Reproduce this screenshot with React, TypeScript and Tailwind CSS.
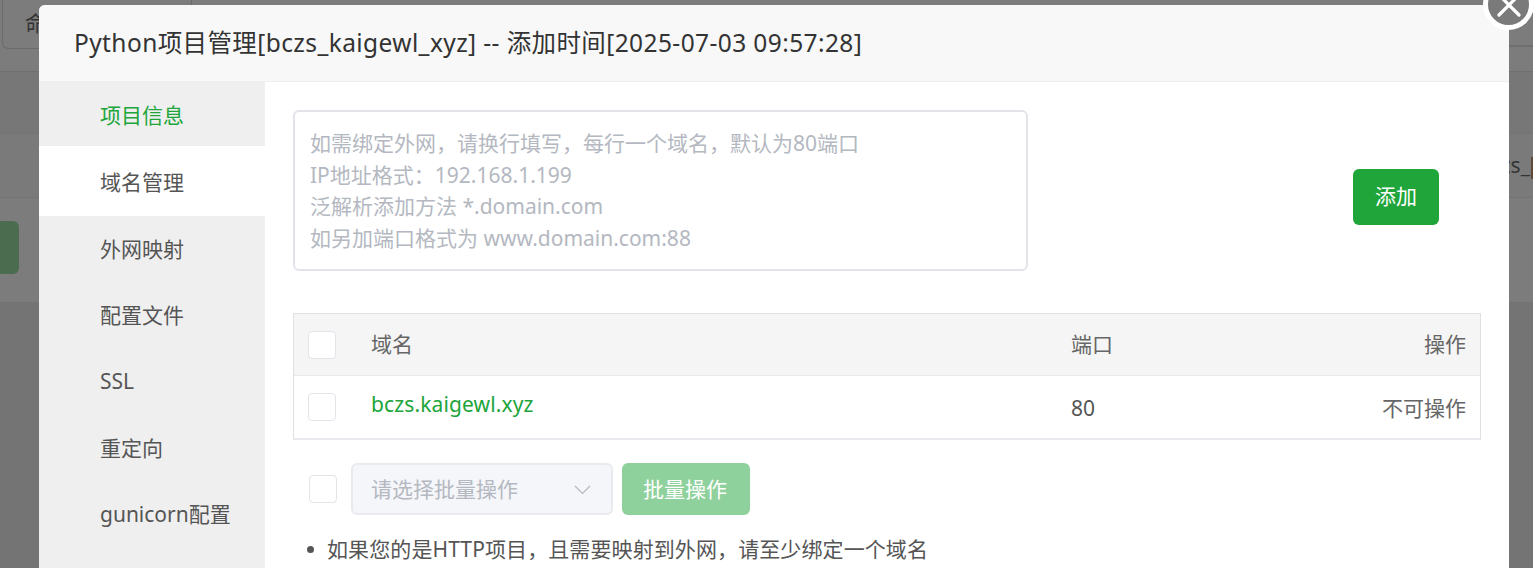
const font = { fontFamily: '"Noto Sans", "Noto Sans CJK SC", sans-serif' };

function Check() {
  return <span className="block w-[28px] h-[28px] bg-white border border-[#e2e4ea] rounded-[4px]" />;
}

function Background() {
  return (
    <div className="absolute inset-0 bg-[#7f7f7f] overflow-hidden">
      <div className="flex flex-col h-full">
        <div className="h-[72px] border-b border-[#6f6f6f] bg-[#7c7c7c] flex pl-[2px] relative">
          <div className="w-[190px] h-[49px] border border-[#6b6b6b] rounded-b-[6px] border-t-0 flex items-center pl-[22px] text-[21px] text-[#333]">命令</div>
          <div className="absolute right-0 top-[45px] w-[60px] h-[2px] bg-[#6f6f6f]" />
        </div>
        <div className="h-[61px] bg-[#777777]" />
        <div className="h-[64px] bg-[#7a7a7a] border-t border-[#747474] relative">
          <div className="absolute right-[3px] top-[16px] text-[21px] text-[#333]">zs_</div>
          <div className="absolute right-0 top-[23px] w-[2px] h-[22px] bg-[#5f4a3a]" />
        </div>
        <div className="h-[106px] bg-[#7c7c7c] border-t border-b border-[#737373]">
          <div className="w-[19px] h-[53px] bg-[#4c6c4f] rounded-r-[6px] mt-[23px]" />
        </div>
        <div className="flex-1 bg-[#747474]" />
      </div>
    </div>
  );
}

const items = [
  ["项目信息", "h-[64px] pt-[4px]", "text-[#20a53a] bg-[#efefef]"],
  ["域名管理", "h-[70px] pt-[3px]", "text-[#555] bg-white"],
  ["外网映射", "h-[66px] pt-[1px]", "text-[#555]"],
  ["配置文件", "h-[66px] pt-[1px]", "text-[#555]"],
  ["SSL", "h-[67px]", "text-[#555]"],
  ["重定向", "h-[67px]", "text-[#555]"],
  ["gunicorn配置", "h-[66px]", "text-[#555]"],
];

export default function App() {
  return (
    <div className="relative w-[1533px] h-[568px] overflow-hidden" style={font}>
      <Background />
      <div className="absolute left-[39px] top-[5px] w-[1470px] h-[600px] bg-white rounded-t-[6px] flex flex-col">
        <div className="h-[77px] shrink-0 bg-[#f8f8f8] border-b border-[#eeeeee] rounded-t-[6px] flex items-center pl-[35px] text-[24.5px] tracking-[0.4px] text-[#333] whitespace-nowrap">
          Python项目管理[bczs_kaigewl_xyz] -- 添加时间[2025-07-03 09:57:28]
        </div>
        <div className="flex flex-1">
          <div className="w-[226px] shrink-0 bg-[#efefef] flex flex-col">
            {items.map(([t, h, c]) => (
              <div key={t} className={`${h} ${c} flex items-center pl-[61px] text-[21px] whitespace-nowrap`}>{t}</div>
            ))}
          </div>
          <div className="flex-1 pl-[28px] pr-[28px] pt-[28px] text-[21px] text-[#555]">
            <div className="flex items-center">
              <div className="w-[735px] h-[161px] border-2 border-[#e2e4ea] rounded-[6px] pl-[15px] pt-[16px] text-[#b4b8c1] text-[21px] leading-[31.5px] whitespace-nowrap">
                <div>如需绑定外网，请换行填写，每行一个域名，默认为80端口</div>
                <div>IP地址格式：192.168.1.199</div>
                <div>泛解析添加方法 *.domain.com</div>
                <div>如另加端口格式为 www.domain.com:88</div>
              </div>
              <button className="ml-[325px] mt-[12px] w-[86px] h-[56px] bg-[#20a53a] rounded-[6px] text-white text-[21px]">添加</button>
            </div>
            <div className="mt-[42px] w-[1188px] border border-[#e0e0e0] border-b-2 border-b-[#e8eaf0]">
              <div className="h-[62px] bg-[#f5f5f5] border-b border-[#e8eaf0] flex items-center pl-[14px] pr-[14px] text-[#666]">
                <Check />
                <span className="ml-[35px] w-[700px]">域名</span>
                <span className="w-[100px]">端口</span>
                <span className="flex-1 text-right">操作</span>
              </div>
              <div className="h-[62px] flex items-center pl-[14px] pr-[14px]">
                <Check />
                <span className="ml-[35px] w-[700px] text-[#20a53a] mt-[-4px] tracking-[0.12px]">bczs.kaigewl.xyz</span>
                <span className="w-[100px] mt-[4px]">80</span>
                <span className="flex-1 text-right text-[#666] mt-[4px]">不可操作</span>
              </div>
            </div>
            <div className="mt-[23px] flex items-center pl-[16px]">
              <Check />
              <div className="ml-[14px] w-[262px] h-[52px] bg-[#f5f6fa] border-2 border-[#e8eaf0] rounded-[6px] flex items-center justify-between pl-[18px] pr-[20px] pt-[2px] text-[#b4b8c1]">
                <span>请选择批量操作</span>
                <svg width="17" height="10" viewBox="0 0 17 10" fill="none" stroke="#b4b8c1" strokeWidth="1.2"><path d="M1 1l7.5 7.5L16 1" /></svg>
              </div>
              <button className="ml-[9px] w-[128px] h-[52px] bg-[#8fd19c] rounded-[6px] text-white text-[21px] pr-[2px] pt-[2px]">批量操作</button>
            </div>
            <div className="mt-[19px] flex items-center pl-[14px] whitespace-nowrap tracking-[0.1px]">
              <span className="w-[7px] h-[7px] rounded-full bg-[#555] mr-[13px]" />
              如果您的是HTTP项目，且需要映射到外网，请至少绑定一个域名
            </div>
          </div>
        </div>
      </div>
      <div className="absolute left-[1483px] top-[-21px] w-[51px] h-[51px] rounded-full bg-[#7a7a7a] border-[5px] border-white flex items-center justify-center">
        <svg width="24" height="24" viewBox="0 0 24 24" stroke="white" strokeWidth="3.2" strokeLinecap="round"><path d="M2 2l20 20M22 2L2 22" /></svg>
      </div>
    </div>
  );
}
